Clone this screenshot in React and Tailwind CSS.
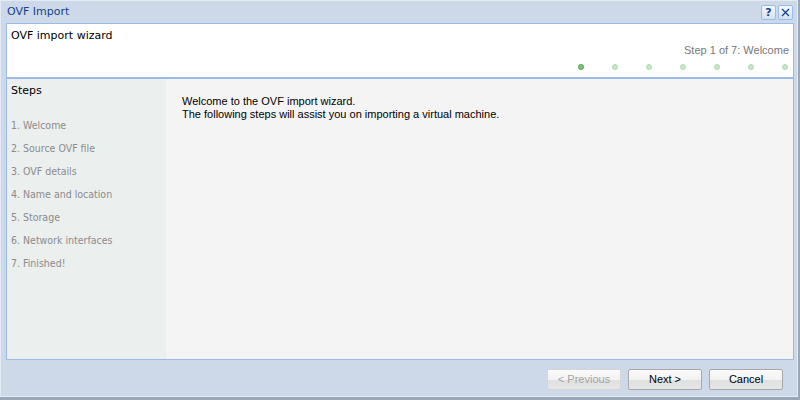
export default function App() {
  const steps = ['1. Welcome', '2. Source OVF file', '3. OVF details', '4. Name and location', '5. Storage', '6. Network interfaces', '7. Finished!']
  const btn = 'w-[74px] h-[21px] rounded-[2px] border text-[11px] bg-[linear-gradient(#fafafa_0%,#f2f2f2_55%,#e0e0e0_55%,#e6e6e6_100%)]'
  return (
    <div className="w-[800px] h-[400px] bg-[#9aa7b8] overflow-hidden" style={{ fontFamily: '"DejaVu Sans", sans-serif' }}>
      <div className="w-[798px] h-[397px] bg-[#cdd9e8] border border-[#e4ebf4] flex flex-col">
        {/* Title bar */}
        <div className="h-[22px] shrink-0 flex items-center justify-between pl-[6px] pr-[4px]">
          <span className="text-[11px] text-[#15428b]">OVF Import</span>
          <div className="flex gap-[2px] mt-[1px]">
            <button className="w-[15px] h-[15px] rounded-[2px] border border-[#99bbe8] bg-gradient-to-b from-[#f4f8fd] to-[#d3e1f1] flex items-center justify-center text-[11px] font-bold text-[#15428b] leading-none">?</button>
            <button className="w-[15px] h-[15px] rounded-[2px] border border-[#99bbe8] bg-gradient-to-b from-[#f4f8fd] to-[#d3e1f1] flex items-center justify-center">
              <svg width="9" height="9" viewBox="0 0 9 9"><path d="M1 1L8 8M8 1L1 8" stroke="#15428b" strokeWidth="1.3" /></svg>
            </button>
          </div>
        </div>

        {/* Main panel */}
        <div className="ml-[5px] mr-[3px] h-[337px] shrink-0 border border-[#99bbe8] flex flex-col">
          <div className="h-[55px] shrink-0 bg-white border-b-2 border-[#99bbe8] flex flex-col px-[4px] pt-[5px]">
            <div className="text-[11px] leading-[14px] text-black">OVF import wizard</div>
            <div className="text-[11px] leading-[14px] text-[#777] text-right" style={{ fontFamily: '"Liberation Sans", sans-serif' }}>Step 1 of 7: Welcome</div>
            <div className="flex justify-end gap-[28px] mt-[7px] pr-[1px]">
              {[0, 1, 2, 3, 4, 5, 6].map(i => (
                <span key={i} className={`w-[6px] h-[6px] rounded-full border ${i === 0 ? 'bg-[#7cc47c] border-[#55a555]' : 'bg-[#c8e8c8] border-[#b0dab0]'}`}></span>
              ))}
            </div>
          </div>
          <div className="flex-1 flex min-h-0">
            <div className="w-[159px] bg-[#ebefee] px-[4px] pt-[5px]">
              <div className="text-[11px] leading-[14px] text-black">Steps</div>
              <div className="mt-[20px] flex flex-col gap-[9px]" style={{ fontFamily: '"DejaVu Sans Condensed", "Liberation Sans", sans-serif' }}>
                {steps.map(s => (
                  <div key={s} className="text-[10.5px] leading-[14px] text-[#8c8c8c]">{s}</div>
                ))}
              </div>
            </div>
            <div className="flex-1 bg-[#f4f4f4] pl-[16px] pt-[16px] text-[11px] leading-[13px] text-black" style={{ fontFamily: '"Liberation Sans", sans-serif' }}>
              <div>Welcome to the OVF import wizard.</div>
              <div>The following steps will assist you on importing a virtual machine.</div>
            </div>
          </div>
        </div>

        {/* Buttons */}
        <div className="flex justify-end gap-[7px] pr-[14px] mt-[9px]" style={{ fontFamily: '"Liberation Sans", sans-serif' }}>
          <button className={`${btn} border-[#d4d4d4] text-[#a4a4a4]`}>&lt; Previous</button>
          <button className={`${btn} border-[#a8a8a8] text-black`}>Next &gt;</button>
          <button className={`${btn} border-[#a8a8a8] text-black`}>Cancel</button>
        </div>
      </div>
    </div>
  )
}
